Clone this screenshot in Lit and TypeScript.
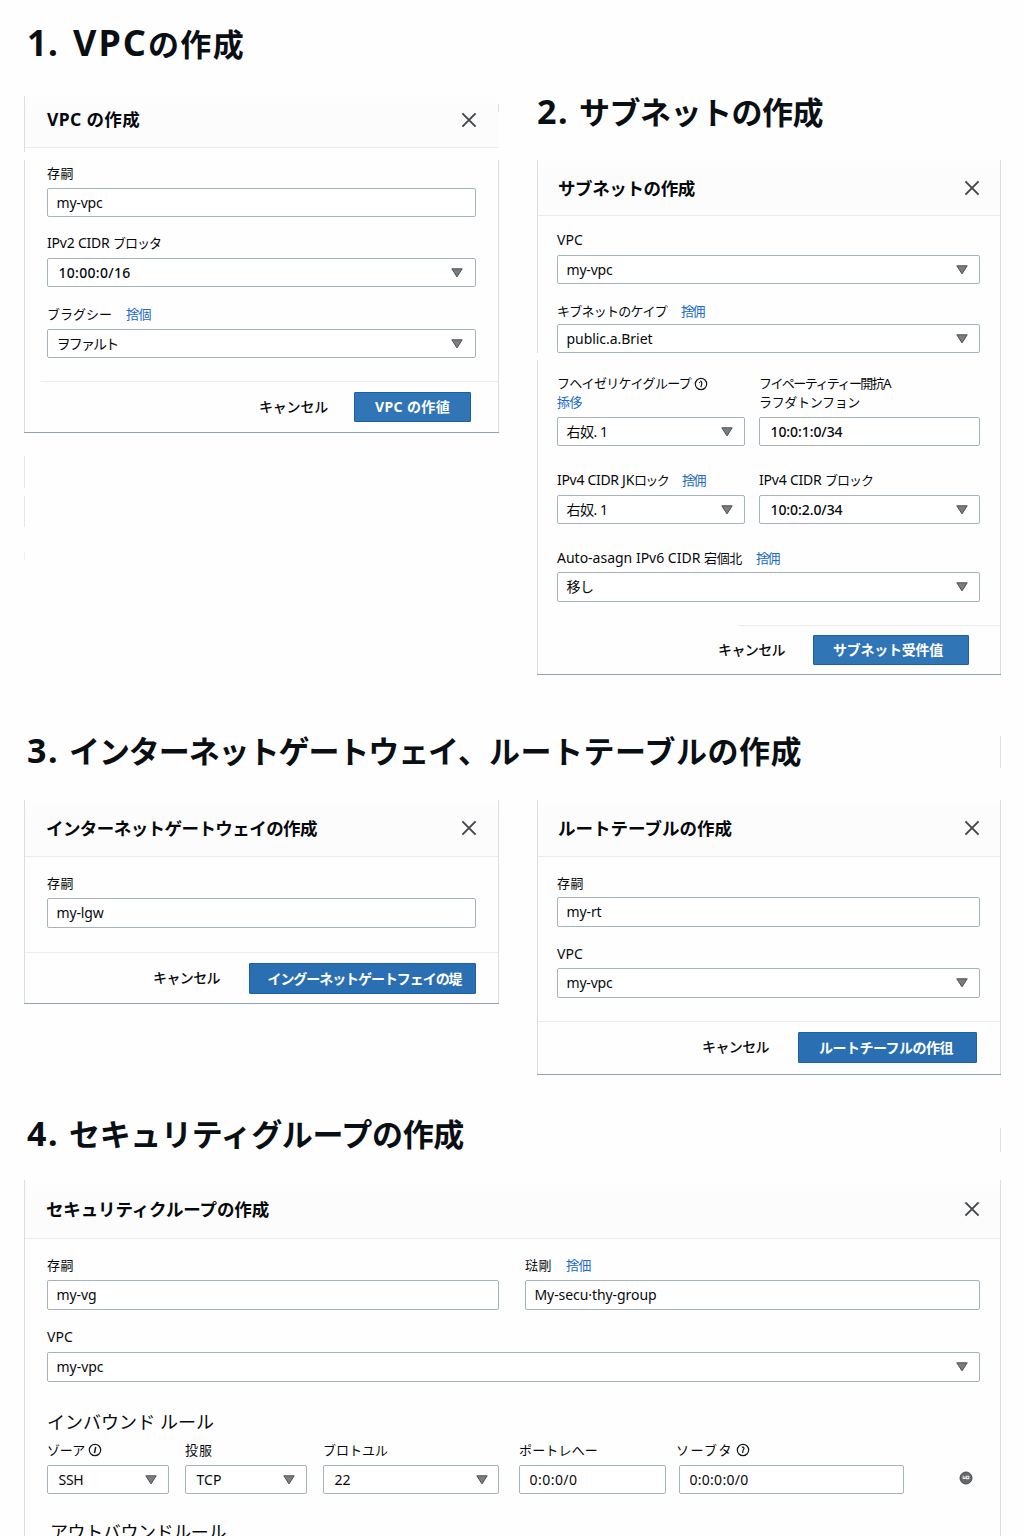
import { LitElement, html, css, svg, nothing } from "lit";
import { customElement, property } from "lit/decorators.js";

/** A single run of text, tracked so that it spans a given width. */
@customElement("fit-text")
class FitText extends LitElement {
  @property() text = "";
  @property({ type: Number }) w = 0;

  static styles = css`
    :host {
      display: inline-block;
      white-space: pre;
      flex: none;
    }
  `;

  render() {
    return html`${this.text}`;
  }

  updated() {
    this.style.letterSpacing = "0px";
    if (!this.w) return;
    const n = [...this.text].length;
    const natural = this.getBoundingClientRect().width;
    this.style.letterSpacing = `${((this.w - natural) / n).toFixed(3)}px`;
  }
}

type Run = [string, number];

const isLatin = (s: string) => /^[\x00-\x7f]+$/.test(s);
const t = (text: string, w = 0) =>
  html`<fit-text class=${isLatin(text) ? "lat" : "jp"} .text=${text} .w=${w}></fit-text>`;
const runs = (list: Run[]) => list.map((r) => t(...r));

const closeIcon = html`<svg class="close" width="16" height="16" viewBox="0 0 16 16">
  <path d="M1.4 1.4 14.6 14.6M14.6 1.4 1.4 14.6" fill="none" stroke="#45494c" stroke-width="2" />
</svg>`;

const arrow = html`<svg class="arrow" width="12" height="10" viewBox="0 0 12 10">
  <path d="M.8 .8H11.2L6 8.9Z" fill="#7b7e80" stroke="#4d5153" stroke-width="1" />
</svg>`;

const info = (glyph: unknown) => html`<svg class="info" width="14" height="14" viewBox="0 0 14 14">
  <circle cx="7" cy="7" r="5.7" fill="none" stroke="#16191c" stroke-width="1.2" />
  ${glyph}
</svg>`;
const infoParen = info(svg`<path d="M6.2 3.8C8.2 4.2 8.2 7.5 6.8 10.2M5.6 5v1" fill="none" stroke="#16191c" stroke-width="1.2" />`);
const infoSlash = info(svg`<path d="M7.7 3.8 6.5 10.2" fill="none" stroke="#16191c" stroke-width="1.5" />`);
const infoQuestion = info(svg`<path d="M5.9 4.2C8.6 3.8 8.3 6 7.1 7.1L6.6 10" fill="none" stroke="#16191c" stroke-width="1.2" />`);

const removeIcon = html`<svg class="remove" width="14" height="14" viewBox="0 0 14 14">
  <circle cx="7" cy="7" r="6" fill="#66696b" stroke="#484b4d" stroke-width="1" />
  <path d="M4.2 4.8v2.6h2V5.2M7.6 4.8v2.8h2.2V5.2H8" fill="none" stroke="#e8eaeb" stroke-width="1.1" />
</svg>`;

interface Field {
  cls?: string;
  label: Run[];
  link?: Run;
  icon?: unknown;
  value: Run;
  select?: boolean;
  strong?: boolean;
}

const field = (f: Field) => html`
  <div class="field ${f.cls ?? ""}">
    <div class="label">
      ${runs(f.label)}${f.icon ?? nothing}${f.link ? html`<a class="link">${t(...f.link)}</a>` : nothing}
    </div>
    <div class="control ${f.strong ? "strong" : ""}">${t(...f.value)}${f.select ? arrow : nothing}</div>
  </div>
`;

const heading = (cls: string, num: Run, text: Run[]) => html`
  <h1 class="heading ${cls}"><span class="num">${t(...num)}</span>${runs(text)}</h1>
`;

const header = (title: Run) => html`
  <header class="head"><h2 class="title">${t(...title)}</h2>${closeIcon}</header>
`;

const footer = (cancelWidth: number, action: Run) => html`
  <footer class="foot">
    <span class="cancel">${t("キャンセル", cancelWidth)}</span>
    <button class="primary">${t(...action)}</button>
  </footer>
`;

@customElement("app-root")
export class AppRoot extends LitElement {
  static styles = css`
    :host {
      display: block;
      --line: #d9dee1;
      --cjk: "Noto Sans CJK JP";
      font-family: "Noto Sans", var(--cjk), sans-serif;
      font-size: 14px;
      line-height: 20px;
      color: #06090c;
    }
    * { box-sizing: border-box; }
    .page {
      width: 1024px;
      height: 1536px;
      overflow: hidden;
      padding: 0 23px 0 24px;
      display: flex;
      flex-direction: column;
      background:
        linear-gradient(#e3e7e8, #e3e7e8) 24px 456px / 1px 32px no-repeat,
        linear-gradient(#e3e7e8, #e3e7e8) 24px 496px / 1px 31px no-repeat,
        linear-gradient(#eef0f1, #eef0f1) 24px 552px / 1px 8px no-repeat,
        linear-gradient(#dde1e3, #dde1e3) 1000px 736px / 1px 32px no-repeat,
        linear-gradient(#dde1e3, #dde1e3) 1000px 1128px / 1px 24px no-repeat,
        #fefefe;
    }
    .page > * { flex: none; }
    .pair { display: grid; grid-template-columns: 475px 464px; column-gap: 38px; align-items: start; }

    .heading {
      margin: 0;
      display: flex;
      align-items: baseline;
      line-height: 48px;
      font-weight: 700;
      font-size: 31px;
      color: #0a0f14;
    }
    .num { font-size: 34px; width: 42px; }
    .h-vpc { padding: 19px 0 0 3px; height: 96px; }
    .h-vpc .num { width: 46px; font-size: 35px; }
    .h-vpc > .lat { font-size: 36px; }
    .h-subnet { padding: 87px 0 0 0; height: 160px; }
    .h-gateway { padding: 51px 0 0 3px; height: 125px; }
    .h-group { padding: 34px 0 0 3px; height: 105px; }

    .card {
      display: flex;
      flex-direction: column;
      border-bottom: 1px solid #8fa3b0;
      background:
        var(--left, linear-gradient(var(--line), var(--line))) 0 0 / 1px 100% no-repeat,
        var(--right, linear-gradient(var(--line), var(--line))) 100% 0 / 1px 100% no-repeat,
        #fefefe;
    }
    .head {
      flex: none;
      margin: 0 1px;
      display: flex;
      justify-content: space-between;
      align-items: center;
      border-bottom: 1px solid #e9ebec;
      background: linear-gradient(#fefefe, #fcfcfc 30%);
      padding: 0 20px 0 21px;
    }
    .title { margin: 0; font-size: 17.5px; line-height: 24px; font-weight: 700; }
    .close { display: block; }
    .body { display: grid; align-items: end; padding-left: 23px; column-gap: 15px; }
    .wide { grid-column: 1 / -1; }

    .label {
      height: 20px;
      margin-bottom: 5px;
      display: flex;
      align-items: center;
      font-size: 13px;
      white-space: nowrap;
    }
    .label .lat { font-size: 14px; }
    .link { color: #2069c9; margin-left: 14px; display: inline-flex; }
    .info { margin-left: 3px; }
    .control {
      height: 29px;
      display: flex;
      align-items: center;
      justify-content: space-between;
      padding: 0 11px 0 8.5px;
      border: 1px solid #a5b5bb;
      border-radius: 2px;
      background: #fff;
    }
    .strong { font-weight: 500; padding-left: 10.5px; }
    .foot {
      flex: none;
      display: flex;
      justify-content: flex-end;
      align-items: flex-start;
      margin: 0 1px;
      padding-top: 11px;
      background: linear-gradient(90deg, transparent var(--rule-start, 0px), #ececed var(--rule-start, 0px)) 0 0 / 100% 1px no-repeat;
    }
    .cancel { line-height: 30px; font-size: 14px; font-weight: 500; }
    .primary {
      height: 30px;
      padding: 0;
      border: 1px solid #1c5ea9;
      border-radius: 1px;
      background: #3075b6;
      color: #fff;
      font: 700 14px/28px "Noto Sans", var(--cjk), sans-serif;
      text-align: center;
    }

    .vpc {
      height: 337px;
      --left: linear-gradient(var(--line) 56px, transparent 56px 64px, var(--line) 64px);
      --right: linear-gradient(transparent 8px, var(--line) 8px 16px, transparent 16px 64px, var(--line) 64px);
      --rule-start: 16px;
    }
    .vpc .head { height: 52px; padding-bottom: 3px; }
    .vpc .head, .gateway .head { padding-right: 21px; }
    .vpc .head { padding-left: 22px; }
    .vpc .title { margin-top: -3px; }
    .vpc .body { grid-template-columns: 429px; grid-template-rows: 69px 70px 71px 23px; }
    .vpc .control { padding-right: 12px; }
    .vpc .foot { padding-right: 27px; }
    .vpc .primary { width: 117px; margin-left: 26px; }

    .subnet {
      height: 515px;
      --left: linear-gradient(var(--line) 193px, transparent 193px 200px, var(--line) 200px);
      --rule-start: 200px;
    }
    .subnet .head { height: 56px; }
    .subnet .head, .route .head { padding-left: 20px; }
    .subnet .body, .route .body { padding-left: 20px; }
    .subnet .body { grid-template-columns: 188px 221px; column-gap: 14px; grid-template-rows: 68px 69px 93px 78px 78px 23px; }
    .subnet .f2 .label { margin-bottom: 3px; }
    .subnet .f3 .label { height: 40px; margin-bottom: 3px; flex-wrap: wrap; align-content: flex-start; line-height: 19px; }
    .subnet .f3 .label > * { height: 19px; }
    .subnet .f3 .label .info { height: 14px; }
    .subnet .f3 .link { margin-left: 0; width: 100%; }
    .subnet .f5 .control { height: 30px; }
    .subnet .f5 .label { margin-bottom: 4px; }
    .subnet .foot { padding-right: 31px; padding-top: 10px; }
    .subnet .primary { width: 156px; margin-left: 28px; padding-right: 6px; }
    .stack { display: block; height: 40px; line-height: 19px; margin-bottom: 3px; font-size: 13px; }
    .stack fit-text { display: block; width: max-content; }

    .gateway { height: 204px; }
    .gateway .head { height: 57px; }
    .gateway .body { grid-template-columns: 429px; grid-template-rows: 71px 24px; }
    .gateway .control, .route .control, .group .f1 .control, .group .f3 .control { height: 30px; }
    .gateway .foot { padding-right: 22px; }
    .gateway .primary { width: 227px; margin-left: 29px; height: 31px; padding-left: 4px; }
    .gateway .primary, .route .primary { background: #2a6fb2; }

    .route { height: 275px; }
    .route .head { height: 57px; }
    .route .body { grid-template-columns: 423px; grid-template-rows: 70px 71px 23px; }
    .route .label { margin-bottom: 4px; }
    .route .foot { padding-right: 23px; }
    .route .primary { width: 179px; margin-left: 29px; height: 31px; padding-right: 3px; }

    .group { height: 420px; border-bottom: 0; }
    .group .head { height: 59px; }
    .group .body { grid-template-columns: 452px 455px; column-gap: 26px; grid-template-rows: 71px 72px; }
    .subtitle { margin: 0; padding-left: 23px; font-weight: 400; font-size: 18px; line-height: 24px; }
    .in { margin-top: 28px; }
    .out { margin-top: 26px; padding-left: 26px; }
    .rules {
      display: grid;
      grid-template-columns: 122px 122px 176px 147px 225px 14px;
      column-gap: 16px;
      padding: 6px 0 0 23px;
      align-items: end;
    }
    .rules .field { min-width: 0; }
    .rules .f8 { margin-left: 4px; margin-right: -4px; }
    .rules .f9 { margin-left: 1px; margin-right: -1px; }
    .rules .f9 .label { margin-left: -3px; }
    .rules .control { padding-left: 10.5px; }
    .rules .f7 .control { padding-right: 10px; }
    .rules .f8 .control, .rules .f9 .control { padding-left: 9.5px; }
    .remove { margin: 0 0 9px 40px; }
  `;

  render() {
    return html`
      <main class="page">
        <div class="pair">
          <section>
            ${heading("h-vpc", ["1.", 32], [["VPC", 75], ["の作成", 97]])}
            <div class="card vpc">
              ${header(["VPC の作成", 93])}
              <div class="body">
                ${field({ label: [["存嗣", 27]], value: ["my-vpc", 46] })}
                ${field({ label: [["IPv2 CIDR ", 66], ["ブロッタ", 48]], value: ["10:00:0/16", 72], select: true, strong: true })}
                ${field({ label: [["ブラグシー", 65]], link: ["捨個", 25], value: ["ヲファルト", 61], select: true })}
              </div>
              ${footer(69, ["VPC の作徝", 75])}
            </div>
          </section>
          <section>
            ${heading("h-subnet", ["2.", 32], [["サブネットの作成", 244]])}
            <div class="card subnet">
              ${header(["サブネットの作成", 137])}
              <div class="body">
                ${field({ cls: "wide f1", label: [["VPC", 26]], value: ["my-vpc", 46], select: true })}
                ${field({ cls: "wide f2", label: [["キブネットのケイプ", 110]], link: ["捨佣", 23], value: ["public.a.Briet", 86], select: true })}
                ${field({ cls: "f3", label: [["フヘイゼリケイグループ", 134]], icon: infoParen, link: ["掭侈", 25], value: ["右奴. 1", 41], select: true })}
                <div class="field">
                  <div class="stack">${t("フイペーティティー開抗A", 131)}${t("ラフダトンフョン", 101)}</div>
                  <div class="control strong">${t("10:0:1:0/34", 72)}</div>
                </div>
                ${field({ cls: "f4", label: [["IPv4 CIDR JK", 77], ["ロック", 34]], link: ["捨佣", 23], value: ["右奴. 1", 41], select: true })}
                ${field({ cls: "f4", label: [["IPv4 CIDR ", 66], ["ブロック", 48]], value: ["10:0:2.0/34", 72], select: true, strong: true })}
                ${field({ cls: "wide f5", label: [["Auto-asagn IPv6 CIDR ", 147], ["宕個北", 38]], link: ["捨佣", 23], value: ["移し", 27], select: true })}
              </div>
              ${footer(67, ["サブネット受件值", 110])}
            </div>
          </section>
        </div>

        ${heading("h-gateway", ["3.", 32], [["インターネットゲートウェイ", 389], ["、", 31], ["ルートテーブルの作成", 313]])}
        <div class="pair">
          <div class="card gateway">
            ${header(["インターネットゲートウェイの作成", 271])}
            <div class="body">${field({ label: [["存嗣", 27]], value: ["my-lgw", 47] })}</div>
            ${footer(67, ["イングーネットゲートフェイの堤", 194])}
          </div>
          <div class="card route">
            ${header(["ルートテーブルの作成", 174])}
            <div class="body">
              ${field({ label: [["存嗣", 27]], value: ["my-rt", 35] })}
              ${field({ label: [["VPC", 26]], value: ["my-vpc", 46], select: true })}
            </div>
            ${footer(67, ["ルートチーフルの作徂", 134])}
          </div>
        </div>

        ${heading("h-group", ["4.", 32], [["セキュリティグループの作成", 395]])}
        <div class="card group">
          ${header(["セキュリティクループの作成", 223])}
          <div class="body">
            ${field({ cls: "f1", label: [["存嗣", 27]], value: ["my-vg", 40] })}
            ${field({ cls: "f1", label: [["琺剛", 27]], link: ["捨佃", 25], value: ["My-secu·thy-group", 122] })}
            ${field({ cls: "wide f3", label: [["VPC", 26]], value: ["my-vpc", 47], select: true })}
          </div>
          <h3 class="subtitle in">${t("インバウンド ルール", 167)}</h3>
          <div class="rules">
            ${field({ label: [["ゾーア", 38]], icon: infoSlash, value: ["SSH", 25], select: true })}
            ${field({ label: [["投服", 28]], value: ["TCP", 25], select: true })}
            ${field({ cls: "f7", label: [["ブロトユル", 65]], value: ["22", 16], select: true })}
            ${field({ cls: "f8", label: [["ポートレへー", 79]], value: ["0:0:0/0", 48] })}
            ${field({ cls: "f9", label: [["ソーブタ", 57]], icon: infoQuestion, value: ["0:0:0:0/0", 59] })}
            ${removeIcon}
          </div>
          <h3 class="subtitle out">${t("アウトバウンドルール", 176)}</h3>
        </div>
      </main>
    `;
  }
}
